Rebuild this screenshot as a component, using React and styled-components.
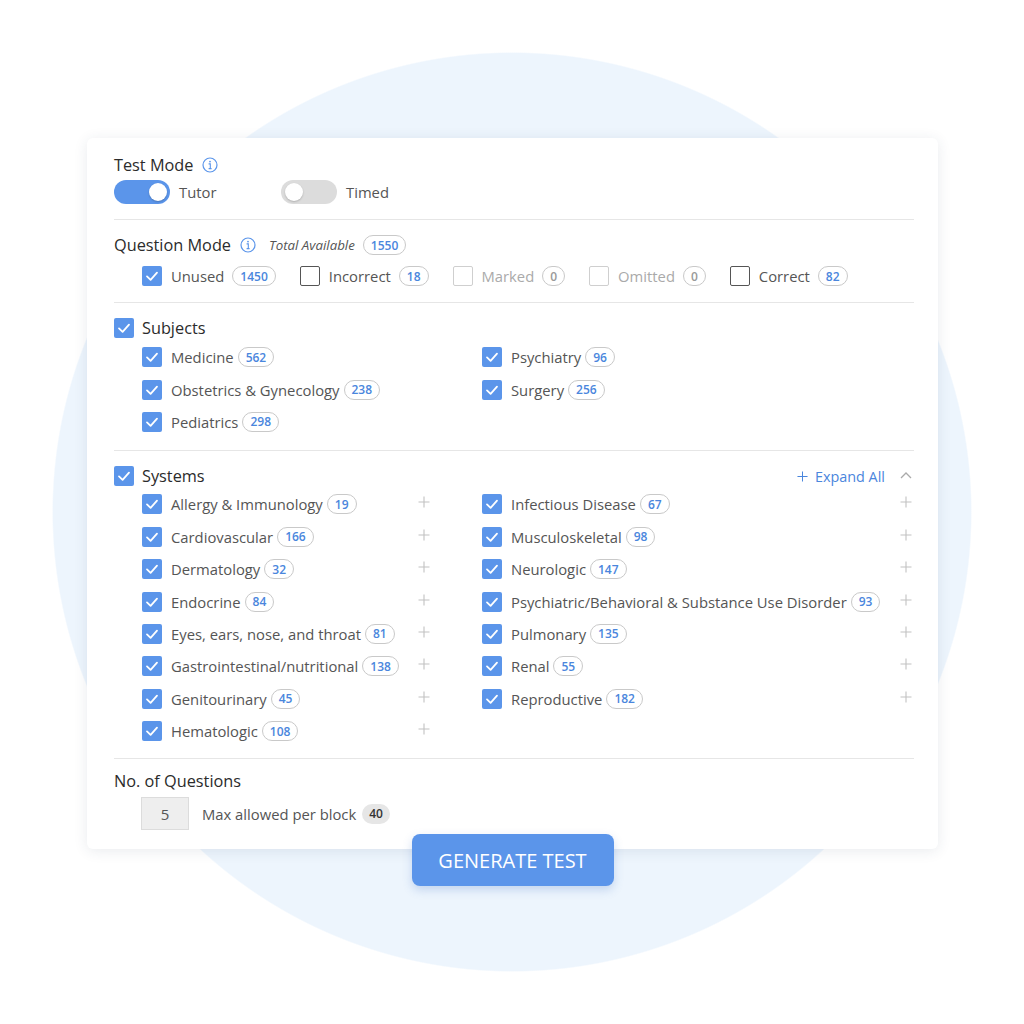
import React from "react";
import styled, { createGlobalStyle } from "styled-components";

const GlobalStyle = createGlobalStyle`
  html, body {
    margin: 0;
    padding: 0;
    background: #fff;
  }
  body {
    font-family: "Open Sans", "Noto Sans", Arial, sans-serif;
    color: #333;
  }
`;

const BLUE = "#5b95ea";
const BLUE_TEXT = "#4a86dd";

// Page with the pale circle painted behind the card
const Page = styled.div`
  width: 1024px;
  height: 1024px;
  box-sizing: border-box;
  padding: 138px 0 0 87px;
  background: radial-gradient(
    circle 460px at 512px 512px,
    #edf5fd 99.7%,
    #ffffff 100%
  );
  display: flex;
  flex-direction: column;
`;

const Card = styled.div`
  width: 851px;
  box-sizing: border-box;
  background: #fff;
  border-radius: 6px;
  box-shadow: 0 2px 14px rgba(40, 60, 90, 0.1);
  padding: 16px 24px 19px 27px;
`;

const Section = styled.div`
  padding: ${(p) => p.$pad || "14px 0 16px"};
  border-bottom: ${(p) => (p.$last ? "none" : "1px solid #e6e6e6")};
`;

const HeadingRow = styled.div`
  display: flex;
  align-items: center;
  height: 22px;
`;

const Heading = styled.span`
  font-size: 16.3px;
  color: #2b2b2b;
  line-height: 22px;
  margin-left: ${(p) => (p.$withBox ? "8px" : "0")};
`;

const InfoWrap = styled.span`
  display: inline-flex;
  margin-left: 9px;
`;

const TotalLabel = styled.span`
  font-size: 13.3px;
  font-style: italic;
  color: #555;
  margin: 0 8px 0 13px;
`;

const ToggleRow = styled.div`
  display: flex;
  align-items: center;
  margin-top: 4px;
`;

const ToggleGroup = styled.div`
  display: flex;
  align-items: center;
  width: 167px;
`;

const Track = styled.span`
  position: relative;
  width: 56px;
  height: 24px;
  border-radius: 12px;
  background: ${(p) => (p.$on ? BLUE : "#dcdcdc")};
  flex-shrink: 0;
`;

const Knob = styled.span`
  position: absolute;
  top: 3px;
  left: ${(p) => (p.$on ? "35px" : "4px")};
  width: 18px;
  height: 18px;
  border-radius: 50%;
  background: #fff;
  box-shadow: 0 1px 2px rgba(0, 0, 0, 0.2);
`;

const ToggleLabel = styled.span`
  font-size: 14.8px;
  color: #555;
  margin-left: 9px;
`;

const ModeRow = styled.div`
  display: flex;
  align-items: center;
  gap: 24px;
  padding-left: 28px;
  margin-top: 10px;
`;

const Item = styled.div`
  display: flex;
  align-items: center;
  height: 20px;
`;

const Box = styled.span`
  width: 20px;
  height: 20px;
  box-sizing: border-box;
  border-radius: 2px;
  flex-shrink: 0;
  display: inline-flex;
  align-items: center;
  justify-content: center;
  background: ${(p) => (p.$checked ? BLUE : "#fff")};
  border: ${(p) =>
    p.$checked ? "none" : p.$disabled ? "1px solid #cfcfcf" : "1.5px solid #555"};
`;

const Label = styled.span`
  font-size: 14.8px;
  color: ${(p) => (p.$disabled ? "#aaa" : "#555")};
  margin-left: 9px;
  white-space: nowrap;
`;

const Badge = styled.span`
  display: inline-flex;
  align-items: center;
  justify-content: center;
  height: 20px;
  min-width: 20px;
  box-sizing: border-box;
  padding: 0 7px;
  margin-left: ${(p) => p.$gap || "6px"};
  border-radius: 10px;
  font-size: 12px;
  font-weight: 600;
  color: ${(p) => (p.$disabled ? "#999" : p.$filled ? "#333" : BLUE_TEXT)};
  background: ${(p) => (p.$filled ? "#e6e6e6" : "#fff")};
  border: ${(p) => (p.$filled ? "none" : "1px solid #c9c9c9")};
`;

const Grid = styled.div`
  display: grid;
  grid-template-columns: 290px 1fr;
  column-gap: 50px;
  padding-left: 28px;
  margin-top: ${(p) => p.$top || "2px"};
`;

const GridItem = styled(Item)`
  height: 32.4px;
`;

const PlusWrap = styled.span`
  margin-left: auto;
  margin-right: 2px;
  display: inline-flex;
  margin-top: -4px;
`;

const HeaderRight = styled.div`
  margin-left: auto;
  display: flex;
  align-items: center;
`;

const ExpandAll = styled.span`
  display: inline-flex;
  align-items: center;
  gap: 7px;
  font-size: 14.4px;
  color: ${BLUE_TEXT};
`;

const ChevronWrap = styled.span`
  display: inline-flex;
  margin-left: 15px;
  margin-right: 2px;
  margin-top: -3px;
`;

const QuestionsRow = styled.div`
  display: flex;
  align-items: center;
  padding-left: 27px;
  margin-top: 5px;
`;

const NumInput = styled.div`
  width: 48px;
  height: 33px;
  box-sizing: border-box;
  background: #eee;
  border: 1px solid #dcdcdc;
  display: flex;
  align-items: center;
  justify-content: center;
  font-size: 15px;
  color: #555;
`;

const MaxLabel = styled.span`
  font-size: 14.8px;
  color: #555;
  margin-left: 13px;
`;

const ButtonRow = styled.div`
  width: 851px;
  display: flex;
  justify-content: center;
  margin-top: -15px;
`;

const GenerateButton = styled.button`
  width: 202px;
  height: 52px;
  border: none;
  border-radius: 8px;
  background: ${BLUE};
  color: #fff;
  font-family: "Open Sans", Arial, sans-serif;
  font-size: 20px;
  box-shadow: 0 4px 10px rgba(70, 120, 200, 0.25);
  cursor: pointer;
`;

const InfoIcon = () => (
  <svg width="16" height="16" viewBox="0 0 16 16">
    <circle cx="8" cy="8" r="7" fill="none" stroke={BLUE} strokeWidth="1.2" />
    <circle cx="8" cy="4.6" r="0.9" fill={BLUE} />
    <path
      d="M6.6 6.9 H8.3 V11.4 M6.6 11.6 H9.6"
      fill="none"
      stroke={BLUE}
      strokeWidth="1.1"
    />
  </svg>
);

const Check = () => (
  <svg width="20" height="20" viewBox="0 0 20 20">
    <polyline
      points="5,10.4 8.6,13.8 15,6.6"
      fill="none"
      stroke="#fff"
      strokeWidth="1.8"
      strokeLinecap="round"
      strokeLinejoin="round"
    />
  </svg>
);

const Plus = ({ color = "#c2c2c2", size = 12 }) => (
  <svg width={size} height={size} viewBox="0 0 12 12">
    <path d="M6 0.5 V11.5 M0.5 6 H11.5" stroke={color} strokeWidth="1.1" />
  </svg>
);

const ChevronUp = () => (
  <svg width="12" height="8" viewBox="0 0 12 8">
    <polyline
      points="1,7 6,2 11,7"
      fill="none"
      stroke="#aaa"
      strokeWidth="1.3"
    />
  </svg>
);

const CheckBox = ({ checked, disabled }) => (
  <Box $checked={checked} $disabled={disabled}>
    {checked && <Check />}
  </Box>
);

const modes = [
  { label: "Unused", count: 1450, checked: true },
  { label: "Incorrect", count: 18 },
  { label: "Marked", count: 0, disabled: true },
  { label: "Omitted", count: 0, disabled: true },
  { label: "Correct", count: 82 },
];

const subjects = [
  ["Medicine", 562],
  ["Psychiatry", 96],
  ["Obstetrics & Gynecology", 238],
  ["Surgery", 256],
  ["Pediatrics", 298],
];

const systemsLeft = [
  ["Allergy & Immunology", 19],
  ["Cardiovascular", 166],
  ["Dermatology", 32],
  ["Endocrine", 84],
  ["Eyes, ears, nose, and throat", 81],
  ["Gastrointestinal/nutritional", 138],
  ["Genitourinary", 45],
  ["Hematologic", 108],
];

const systemsRight = [
  ["Infectious Disease", 67],
  ["Musculoskeletal", 98],
  ["Neurologic", 147],
  ["Psychiatric/Behavioral & Substance Use Disorder", 93],
  ["Pulmonary", 135],
  ["Renal", 55],
  ["Reproductive", 182],
];

// interleave the two columns so the grid fills row by row
const systems = [];
for (let i = 0; i < systemsLeft.length; i++) {
  systems.push(systemsLeft[i]);
  systems.push(systemsRight[i] || null);
}

const App = () => {
  return (
    <Page>
      <GlobalStyle />
      <Card>
        {/* Test Mode */}
        <Section $pad="0 0 15px">
          <HeadingRow>
            <Heading>Test Mode</Heading>
            <InfoWrap>
              <InfoIcon />
            </InfoWrap>
          </HeadingRow>
          <ToggleRow>
            <ToggleGroup>
              <Track $on>
                <Knob $on />
              </Track>
              <ToggleLabel>Tutor</ToggleLabel>
            </ToggleGroup>
            <ToggleGroup>
              <Track>
                <Knob />
              </Track>
              <ToggleLabel>Timed</ToggleLabel>
            </ToggleGroup>
          </ToggleRow>
        </Section>

        {/* Question Mode */}
        <Section>
          <HeadingRow>
            <Heading>Question Mode</Heading>
            <InfoWrap>
              <InfoIcon />
            </InfoWrap>
            <TotalLabel>Total Available</TotalLabel>
            <Badge $gap="0">1550</Badge>
          </HeadingRow>
          <ModeRow>
            {modes.map((m) => (
              <Item key={m.label}>
                <CheckBox checked={m.checked} disabled={m.disabled} />
                <Label $disabled={m.disabled}>{m.label}</Label>
                <Badge $gap="8px" $disabled={m.disabled}>
                  {m.count}
                </Badge>
              </Item>
            ))}
          </ModeRow>
        </Section>

        {/* Subjects */}
        <Section $pad="14px 0 12px">
          <HeadingRow>
            <CheckBox checked />
            <Heading $withBox>Subjects</Heading>
          </HeadingRow>
          <Grid>
            {subjects.map(([name, n]) => (
              <GridItem key={name}>
                <CheckBox checked />
                <Label>{name}</Label>
                <Badge $gap="4px">{n}</Badge>
              </GridItem>
            ))}
          </Grid>
        </Section>

        {/* Systems */}
        <Section $pad="14px 0 11px">
          <HeadingRow>
            <CheckBox checked />
            <Heading $withBox>Systems</Heading>
            <HeaderRight>
              <ExpandAll>
                <Plus color={BLUE_TEXT} size={11} />
                Expand All
              </ExpandAll>
              <ChevronWrap>
                <ChevronUp />
              </ChevronWrap>
            </HeaderRight>
          </HeadingRow>
          <Grid $top="1px">
            {systems.map((s, i) =>
              s ? (
                <GridItem key={s[0]}>
                  <CheckBox checked />
                  <Label>{s[0]}</Label>
                  <Badge $gap="4px">{s[1]}</Badge>
                  <PlusWrap>
                    <Plus />
                  </PlusWrap>
                </GridItem>
              ) : (
                <span key={"empty" + i} />
              )
            )}
          </Grid>
        </Section>

        {/* No. of Questions */}
        <Section $pad="11px 0 0" $last>
          <HeadingRow>
            <Heading>No. of Questions</Heading>
          </HeadingRow>
          <QuestionsRow>
            <NumInput>5</NumInput>
            <MaxLabel>Max allowed per block</MaxLabel>
            <Badge $filled $gap="6px">
              40
            </Badge>
          </QuestionsRow>
        </Section>
      </Card>
      <ButtonRow>
        <GenerateButton>GENERATE TEST</GenerateButton>
      </ButtonRow>
    </Page>
  );
};

export default App;
